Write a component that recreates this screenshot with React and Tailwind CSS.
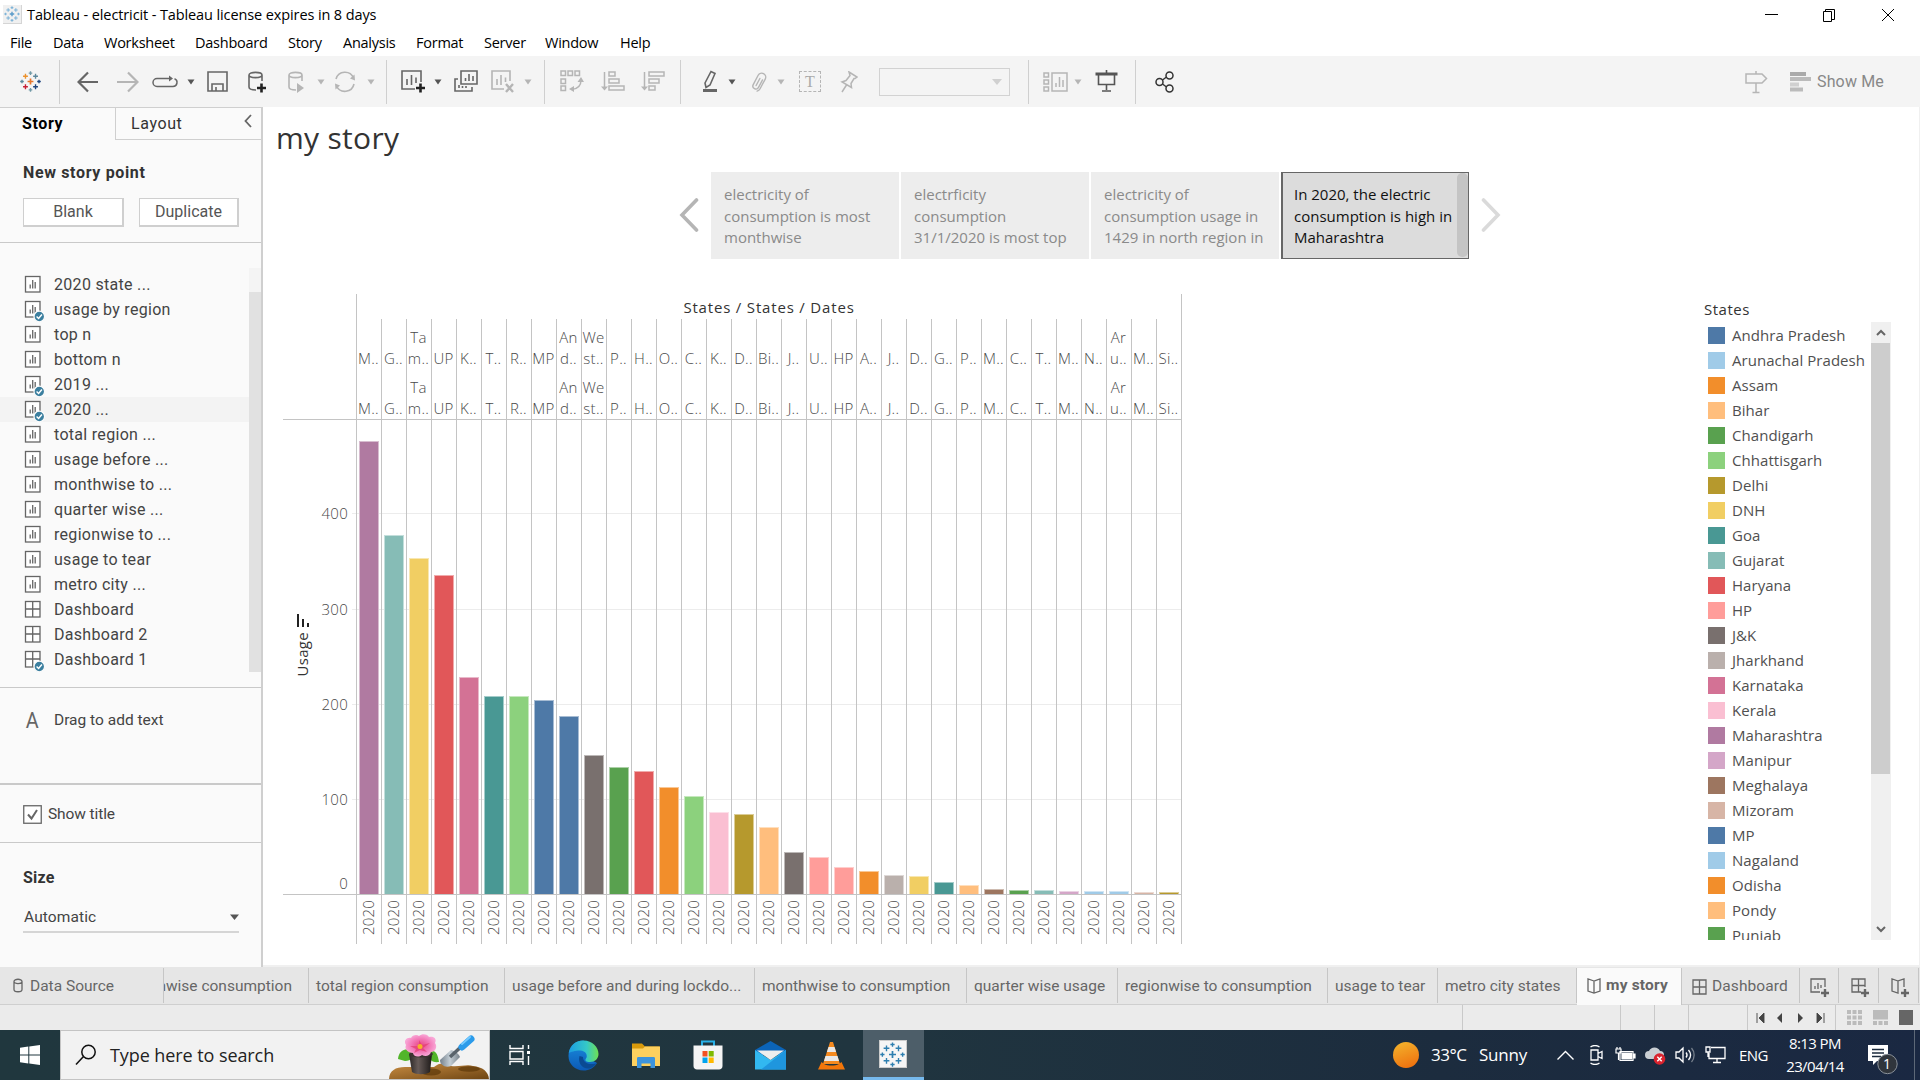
import React from "react";

const P = {
  blue: "#4e79a7", ltblue: "#a0cbe8", orange: "#f28e2b", ltorange: "#ffbe7d", green: "#59a14f",
  ltgreen: "#8cd17d", olive: "#b6992d", yellow: "#f1ce63", teal: "#499894", ltteal: "#86bcb6",
  red: "#e15759", ltred: "#ff9d9a", dark: "#79706e", gray: "#bab0ac", pink: "#d37295",
  ltpink: "#fabfd2", purple: "#b07aa1", ltpurple: "#d4a6c8", brown: "#9d7660", ltbrown: "#d7b5a6",
};

// label lines, bar height in px, colour
const BARS = [
  [["M.."], 453, P.purple], [["G.."], 359, P.ltteal], [["Ta", "m.."], 336, P.yellow], [["UP"], 319, P.red],
  [["K.."], 217, P.pink], [["T.."], 198, P.teal], [["R.."], 198, P.ltgreen], [["MP"], 194, P.blue],
  [["An", "d.."], 178, P.blue], [["We", "st.."], 139, P.dark], [["P.."], 127, P.green], [["H.."], 123, P.red],
  [["O.."], 107, P.orange], [["C.."], 98, P.ltgreen], [["K.."], 82, P.ltpink], [["D.."], 80, P.olive],
  [["Bi.."], 67, P.ltorange], [["J.."], 42, P.dark], [["U.."], 37, P.ltred], [["HP"], 27, P.ltred],
  [["A.."], 23, P.orange], [["J.."], 19, P.gray], [["D.."], 18, P.yellow], [["G.."], 12, P.teal],
  [["P.."], 9, P.ltorange], [["M.."], 5, P.brown], [["C.."], 4, P.green], [["T.."], 4, P.ltteal],
  [["M.."], 3, P.ltpurple], [["N.."], 3, P.ltblue], [["Ar", "u.."], 3, P.ltblue], [["M.."], 2, P.ltbrown], [["Si.."], 2, P.olive],
];

const LEGEND = [
  ["Andhra Pradesh", P.blue], ["Arunachal Pradesh", P.ltblue], ["Assam", P.orange], ["Bihar", P.ltorange],
  ["Chandigarh", P.green], ["Chhattisgarh", P.ltgreen], ["Delhi", P.olive], ["DNH", P.yellow], ["Goa", P.teal],
  ["Gujarat", P.ltteal], ["Haryana", P.red], ["HP", P.ltred], ["J&K", P.dark], ["Jharkhand", P.gray],
  ["Karnataka", P.pink], ["Kerala", P.ltpink], ["Maharashtra", P.purple], ["Manipur", P.ltpurple],
  ["Meghalaya", P.brown], ["Mizoram", P.ltbrown], ["MP", P.blue], ["Nagaland", P.ltblue], ["Odisha", P.orange],
  ["Pondy", P.ltorange], ["Punjab", P.green],
];

const SHEETS = [
  ["2020 state ..."], ["usage by region", 1], ["top n"], ["bottom n"], ["2019 ...", 1], ["2020 ...", 1],
  ["total region ..."], ["usage before ..."], ["monthwise to ..."], ["quarter wise ..."], ["regionwise to ..."],
  ["usage to tear"], ["metro city ..."], ["Dashboard", 0, 1], ["Dashboard 2", 0, 1], ["Dashboard 1", 1, 1],
];

const MENU = [
  ["File", "w-[43px]"], ["Data", "w-[51px]"], ["Worksheet", "w-[91px]"], ["Dashboard", "w-[93px]"], ["Story", "w-[55px]"],
  ["Analysis", "w-[73px]"], ["Format", "w-[68px]"], ["Server", "w-[61px]"], ["Window", "w-[75px]"], ["Help", "w-[60px]"],
];

function Svg({ w, h, className = "", children, stroke = "#666", sw = 1.6 }) {
  return (
    <svg width={w} height={h} viewBox={`0 0 ${w} ${h}`} fill="none" stroke={stroke} strokeWidth={sw} className={`shrink-0 ${className}`}>
      {children}
    </svg>
  );
}

const plus = (x, y, r) => `M${x - r} ${y}h${2 * r}M${x} ${y - r}v${2 * r}`;

function TableauMark({ size, colors, sw = 0.9, className = "" }) {
  const c = colors;
  return (
    <svg width={size} height={size} viewBox="0 0 20 20" fill="none" strokeWidth={sw} className={`shrink-0 ${className}`}>
      <path d={plus(10, 10, 2.8)} stroke={c[0]} strokeWidth={sw * 1.25} />
      <path d={plus(5.2, 5, 2.3)} stroke={c[1]} />
      <path d={plus(14.8, 5, 2.3)} stroke={c[2]} />
      <path d={plus(5.2, 15, 2.3)} stroke={c[3]} />
      <path d={plus(14.8, 15, 2.3)} stroke={c[4]} />
      <path d={plus(10, 2, 1.7)} stroke={c[5]} />
      <path d={plus(10, 18, 1.7)} stroke={c[5]} />
      <path d={plus(1.9, 10, 1.7)} stroke={c[6]} />
      <path d={plus(18.1, 10, 1.7)} stroke={c[4]} />
    </svg>
  );
}

function Caret({ className, light }) {
  return (
    <svg width="8" height="6" viewBox="0 0 8 6" className={`shrink-0 ${className}`}>
      <path d="M0.5 0.5h7L4 5.5z" fill={light ? "#b5b5b5" : "#555"} />
    </svg>
  );
}

const Sep = ({ className }) => <div className={`h-[44px] w-px shrink-0 bg-[#cfcfcf] ${className}`} />;

function TitleBar() {
  return (
    <div className="flex h-[29px] items-center bg-white pl-[3px]">
      <div className="flex h-[19px] w-[19px] items-center justify-center border-r border-b border-[#d5d5d5] bg-[#f0f0f0]">
        <TableauMark size={16} colors={["#5a9bc9", "#7fb4d8", "#7fb4d8", "#7fb4d8", "#7fb4d8", "#7fb4d8", "#7fb4d8"]} sw={1.4} />
      </div>
      <span className="ml-[5px] flex-1 text-[14.5px] tracking-[-0.11px] text-black">Tableau - electricit - Tableau license expires in 8 days</span>
      <Svg w={150} h={20} stroke="#000" sw={1}>
        <path d="M0 9.5h13" />
        <path d="M58.5 6.5h8v10h-8zM60.5 6V4.500h9v10H67" />
        <path d="M117 4l12 12M129 4l-12 12" />
      </Svg>
      <div className="w-[5px]" />
    </div>
  );
}

function MenuBar() {
  return (
    <div className="flex h-[27px] items-center bg-white pl-[10px]">
      {MENU.map(([t, w]) => (
        <span key={t} className={`${w} text-[14.5px] tracking-[-0.25px] text-black`}>{t}</span>
      ))}
    </div>
  );
}

const G = "#b5b5b5";
function Toolbar() {
  return (
    <div className="flex h-[51px] items-center bg-[#f4f4f4]">
      <TableauMark size={21} className="ml-[20px]" sw={1.3} colors={["#e8762c", "#eb912c", "#5b879b", "#c72035", "#1f457e", "#7099a6", "#59879b"]} />
      <Sep className="ml-[18px]" />
      <Svg w={22} h={22} className="ml-[17px]" sw={2.2}><path d="M21 11H2M11 1.500L1.500 11l9.500 9.500" /></Svg>
      <Svg w={22} h={22} className="ml-[18px]" stroke={G} sw={2.2}><path d="M0 11h19M11 1.500l9.500 9.500L11 20.500" /></Svg>
      <Svg w={27} h={14} className="ml-[13px]" sw={1.500}><path d="M13 3.500H5a4 4 0 0 0 0 8h16a4 4 0 0 0 1.500-7.700M10 3.500h8" /><path d="M17 .5v6l4-3z" fill="#666" stroke="none" /></Svg>
      <Caret className="ml-[8px]" />
      <Svg w={21} h={21} className="ml-[12px]"><path d="M1 1h19v19H1zM5 20v-7h11v7M9 20v-4" /></Svg>
      <Svg w={20} h={22} className="ml-[20px]"><path d="M14 10V4c0-3.500-13-3.500-13 0v12c0 2 3 3 7 3M1 4c0 3.500 13 3.500 13 0" /><path d="M9 17h9M13.500 12.500v9" stroke="#222" strokeWidth="2.6" /></Svg>
      <Svg w={18} h={22} className="ml-[20px]" stroke={G}><path d="M14 10V4c0-3.500-13-3.500-13 0v12c0 2 3 3 7 3M1 4c0 3.500 13 3.500 13 0" /><path d="M9 12v10l7-5z" fill={G} stroke="none" /></Svg>
      <Caret light className="ml-[11px]" />
      <Svg w={22} h={22} className="ml-[9px]" stroke={G}><path d="M2 8a9.300 9.300 0 0 1 17.500-1M20 13a9.300 9.300 0 0 1-17.500 2" /><path d="M20.500 3.500l.5 6-5-2zM1.500 18.500l-.5-6 5 2z" fill={G} stroke="none" /></Svg>
      <Caret light className="ml-[11px]" />
      <Sep className="ml-[11px]" />
      <Svg w={25} h={23} className="ml-[14px]"><path d="M20 12V1H1v18h13M6 15V9M10.500 15V5M15 13V7.500" /><path d="M15 18h9M19.500 13.500v9" stroke="#222" strokeWidth="2.600" /></Svg>
      <Caret className="ml-[8px]" />
      <Svg w={24} h={23} className="ml-[12px]"><path d="M7 1h16v13H7zM11.500 11V8M15 11V4M19 11V6M4 9H1v12h17v-4M5 18v-3M8.500 18v-2M12 18v-2" /></Svg>
      <Svg w={24} h={23} className="ml-[13px]" stroke={G}><path d="M19 11V1H1v18h12M6 15V9M10 15V5M14.500 12V7.500" /><path d="M15 14l7 8M22 14l-7 8" strokeWidth="2.400" /></Svg>
      <Caret light className="ml-[9px]" />
      <Sep className="ml-[12px]" />
      <Svg w={24} h={23} className="ml-[15px]" stroke={G} sw={1.500}><path d="M1 1h4.500v4.500H1zM8 1h4.500v4.500H8zM15 1h4.500v4.500H15zM1 9h4.500v4.500H1zM1 16h4.500v4.500H1zM21 10c0 6-3 9-9.500 9.500" /><path d="M17.500 12l3.500-5 3 5zM14 16v6l-5-3z" fill={G} stroke="none" /></Svg>
      <Svg w={24} h={23} className="ml-[17px]" stroke={G} sw={1.500}><path d="M3.500 2v16M8 2h6v4H8zM8 9h10v4H8zM8 16h15v4H8z" /><path d="M0 16.500h7l-3.500 4z" fill={G} stroke="none" /></Svg>
      <Svg w={24} h={23} className="ml-[16px]" stroke={G} sw={1.500}><path d="M3.500 2v16M8 2h15v4H8zM8 9h10v4H8zM8 16h6v4H8z" /><path d="M0 16.500h7l-3.500 4z" fill={G} stroke="none" /></Svg>
      <Sep className="ml-[15px]" />
      <Svg w={16} h={23} className="ml-[21px]"><path d="M3 13L9 1.500l4 2L8 15l-4 2.500z" /><path d="M1 20.500h14" strokeWidth="3" /></Svg>
      <Caret className="ml-[10px]" />
      <svg width="18" height="22" viewBox="0 0 18 22" fill="none" stroke={G} strokeWidth="1.400" className="ml-[13px] shrink-0">
        <g transform="rotate(28 9 11)"><path d="M12 7v8.500a3 3 0 0 1-6 0V5a4 4 0 0 1 8 0v11a5 5 0 0 1-1.500 3.500M9 7v8" strokeLinecap="round" /></g>
      </svg>
      <Caret light className="ml-[10px]" />
      <div className="ml-[14px] flex h-[21px] w-[22px] items-center justify-center border-[1.5px] border-dashed border-[#b5b5b5] font-['Liberation_Serif'] text-[16px] text-[#aaa]">T</div>
      <Svg w={18} h={22} className="ml-[19px]" stroke={G} sw={1.500}><path d="M9 1l8 5-2 1.500-1 0-3 5 .5 4L2 11l4-1.500 4-5zM6.500 14L2 21" /></Svg>
      <div className="ml-[21px] flex h-[28px] w-[131px] items-center justify-end border border-[#d2d2d2] pr-[7px]">
        <svg width="10" height="6"><path d="M0 0h10L5 6z" fill="#d0d0d0" /></svg>
      </div>
      <Sep className="ml-[18px]" />
      <Svg w={26} h={20} className="ml-[14px]" stroke={G} sw={1.500}><path d="M1 1h4.500v4H1zM1 8h4.500v4H1zM1 15h4.500v4H1zM9 1h15v18H9zM13 15v-4M16.500 15V5M20 15V8" /></Svg>
      <Caret light className="ml-[5px]" />
      <Svg w={23} h={23} className="ml-[13px]" stroke="#555"><path d="M3.500 5v9.500h16V5M11.500 14v6M7 21h9M11.500 0v3" /><path d="M.5 4h22" strokeWidth="3" /></Svg>
      <Sep className="ml-[17px]" />
      <Svg w={20} h={22} className="ml-[19px]" stroke="#333" sw={1.500}><circle cx="4.500" cy="11" r="3.500" /><circle cx="14.500" cy="4.500" r="3.500" /><circle cx="14.500" cy="17.500" r="3.500" /><path d="M7.500 9l4-3M7.500 13l4 3" /></Svg>
      <div className="flex-1" />
      <Svg w={25} h={24} stroke={G} sw={1.500}><path d="M2 4h16l4.500 4.500L18 13H2zM12 1v3M12 13v9M8.500 22.500h7" /></Svg>
      <svg width="22" height="20" className="ml-[21px] shrink-0"><path d="M0 0h16v4H0z" fill="#aaa" /><path d="M0 5h21v4H0zM0 15.500h13v4H0z" fill="#bbb" /><path d="M0 10.500h9v4H0z" fill="#d0d0d0" /></svg>
      <span className="mr-[34px] ml-[5px] w-[69px] whitespace-nowrap font-['Roboto'] text-[16px] tracking-[0.15px] text-[#888]">Show Me</span>
    </div>
  );
}

function SheetIcon({ done, dash }) {
  return (
    <svg width="21" height="23" viewBox="0 0 21 23" fill="none" stroke="#666" strokeWidth="1.300" className="shrink-0">
      <rect x="1.500" y="1.500" width="14.500" height="15.500" fill="#fff" />
      {dash ? <path d="M8.700 2v15M2 9h14" /> : <path d="M6.200 13.500V9.500M8.700 13.500V5M11.200 13.500V7" />}
      {done ? <g><circle cx="15.300" cy="16.500" r="5.300" fill="#3b7f9f" stroke="#fafafa" /><path d="M12.600 16.500l2 2 3.300-4" stroke="#fff" strokeWidth="1.400" /></g> : null}
    </svg>
  );
}

function Sidebar() {
  return (
    <div className="flex w-[263px] shrink-0 flex-col border-t border-r-2 border-[#cfcfcf] bg-[#fafafa] font-['Roboto'] text-[#444]">
      <div className="flex h-[32px]">
        <div className="w-[115px] pt-[5px] pl-[22px] text-[16px] leading-[21px] font-bold tracking-[0.6px] text-black">Story</div>
        <div className="flex flex-1 justify-between border-b border-l border-[#cfcfcf] pt-[5px] pr-[9px] pl-[15px]">
          <span className="text-[16px] leading-[21px] tracking-[0.6px] text-[#333]">Layout</span>
          <Svg w={8} h={14} className="mt-[1px]" sw={1.800}><path d="M7 1L1.500 7 7 13" /></Svg>
        </div>
      </div>
      <div className="h-[103px] border-b border-[#c9c9c9] pt-[22px] pl-[23px]">
        <div className="text-[16px] leading-[21px] font-bold tracking-[0.65px] text-[#333]">New story point</div>
        <div className="mt-[15px] flex gap-[15px] text-[16px]">
          <div className="flex h-[29px] w-[101px] items-center justify-center border border-r-2 border-b-2 border-[#cfcfcf] bg-white text-[#555]">Blank</div>
          <div className="flex h-[29px] w-[100px] items-center justify-center border border-r-2 border-b-2 border-[#cfcfcf] bg-white text-[#555]">Duplicate</div>
        </div>
      </div>
      <div className="flex h-[445px] border-b border-[#c9c9c9] pt-[25px]">
        <div className="flex flex-1 flex-col pt-[4px]">
          {SHEETS.map(([t, done, dash]) => (
            <div key={t} className={`flex h-[25px] items-center gap-[9px] pl-[24px] ${t === "2020 ..." ? "bg-[#f3f3f3]" : ""}`}>
              <div className="flex pt-[3px]"><SheetIcon done={done} dash={dash} /></div>
              <span className="text-[16px] leading-[25px] tracking-[0.3px] whitespace-nowrap">{t}</span>
            </div>
          ))}
        </div>
        <div className="h-[404px] w-[12px] bg-[#f4f4f4] pt-[24px]"><div className="h-full bg-[#e1e1e1]" /></div>
      </div>
      <div className="flex h-[97px] border-b-2 border-[#c9c9c9] pt-[21px] pl-[25px]">
        <span className="w-[29px] text-[22px] leading-[24px] text-[#666]"><span className="inline-block scale-x-90">A</span></span>
        <span className="text-[15.5px] leading-[23px]">Drag to add text</span>
      </div>
      <div className="flex h-[58px] items-center gap-[6px] border-b border-[#c9c9c9] pt-px pl-[23px]">
        <Svg w={19} h={19}><rect x=".75" y=".75" width="17.500" height="17.500" fill="#fff" strokeWidth="1.300" /><path d="M5 9.500l3.500 4L14 5" strokeWidth="2" /></Svg>
        <span className="pt-[2px] text-[15.5px] tracking-[-0.1px]">Show title</span>
      </div>
      <div className="flex-1 pt-[24px] pl-[23px]">
        <div className="text-[16px] leading-[21px] font-bold tracking-[0.2px] text-[#333]">Size</div>
        <div className="mt-[14px] flex h-[31px] w-[216px] items-center justify-between border-b-2 border-[#d5d5d5] pl-px">
          <span className="pt-[2px] text-[15.5px] tracking-[0.1px]">Automatic</span>
          <svg width="9" height="6"><path d="M0 .5h9L4.500 6z" fill="#555" /></svg>
        </div>
      </div>
    </div>
  );
}

const Point = ({ children, active }) => (
  <div className={active
    ? "relative h-[87px] w-[188px] border border-l-2 border-[#666] bg-[#dcdcdc] pt-[11px] pl-[11px] text-[#111]"
    : "h-[87px] w-[188px] bg-[#ededed] pt-[12px] pl-[13px] text-[#8a8a8a]"}>
    <div className="text-[15px] leading-[21.5px] whitespace-pre">{children}</div>
    {active && <div className="absolute top-0 right-0 h-[84px] w-[11px] rounded-[5px] bg-[#c4c4c4]" />}
  </div>
);

function StoryNav() {
  return (
    <div className="flex h-[87px] items-center pl-[416px]">
      <Svg w={20} h={34} stroke="#b5b5b5" sw={3.600} className="mt-[-2px]"><path d="M17.500 2L3 17l14.500 15" strokeLinecap="round" /></Svg>
      <div className="ml-[12px] flex gap-[2px]">
        <Point>{"electricity of\nconsumption is most\nmonthwise"}</Point>
        <Point>{"electrficity\nconsumption\n31/1/2020 is most top"}</Point>
        <Point>{"electricity of\nconsumption usage in\n1429 in north region in"}</Point>
        <Point active>{"In 2020, the electric\nconsumption is high in\nMaharashtra"}</Point>
      </div>
      <Svg w={20} h={34} stroke="#dadada" sw={3.600} className="mt-[-2px] ml-[12px]"><path d="M2.500 2L17 17 2.500 32" strokeLinecap="round" /></Svg>
    </div>
  );
}

function HeaderCell({ lines }) {
  return (
    <div className="flex h-[50px] flex-col items-center justify-end pr-px whitespace-nowrap">
      {lines.map((l) => <span key={l} className="h-[21px] leading-[21px] tracking-[0.3px]">{l}</span>)}
    </div>
  );
}

function Chart() {
  return (
    <div className="flex h-[650px] w-[900px] text-[15px] font-light text-[#484848]">
      <div className="flex h-[601px] w-[73px] flex-col border-b border-[#c4c4c4]">
        <div className="h-[126px] border-b border-[#c4c4c4]" />
        <div className="flex flex-1">
          <div className="flex w-[38px] flex-col items-center pt-[194px]">
            <svg width="13" height="13"><path d="M1 0h2v13H1zM6 5h2v8H6zM11 9h2v4h-2z" fill="#222" /></svg>
            <span className="mt-[5px] rotate-180 text-[15px] font-normal tracking-[0.3px] text-[#333] [writing-mode:vertical-rl]">Usage</span>
          </div>
          <div className="flex w-[27px] flex-col leading-[22px] tracking-[0.3px]">
            <span className="mt-[82px] flex justify-end">400</span>
            <span className="mt-[74px] flex justify-end">300</span>
            <span className="mt-[73px] flex justify-end">200</span>
            <span className="mt-[73px] flex justify-end">100</span>
            <span className="mt-[62px] flex justify-end">0</span>
          </div>
          <div className="ml-auto w-[4px]">
            <div className="mt-[93px] h-px bg-[#ececec]" />
            <div className="mt-[95px] h-px bg-[#ececec]" />
            <div className="mt-[94px] h-px bg-[#ececec]" />
            <div className="mt-[94px] h-px bg-[#ececec]" />
          </div>
        </div>
      </div>
      <div className="w-[826px]">
        <div className="flex h-[25px] items-center justify-center border-x border-[#c4c4c4] text-[15px] font-normal tracking-[0.82px] text-[#333]">
          <span className="pt-px">States / States / Dates</span>
        </div>
        <div className="flex w-[826px] border-r border-[#c4c4c4]">
          {BARS.map(([lines, h, color], i) => (
            <div key={i} className="flex w-[25px] flex-col border-l border-[#c4c4c4]">
              <div className="h-[101px] border-b border-[#c4c4c4]">
                <HeaderCell lines={lines} />
                <HeaderCell lines={lines} />
              </div>
              <div className="flex h-[475px] flex-col justify-end border-b border-[#c4c4c4] bg-[linear-gradient(#ececec,#ececec),linear-gradient(#ececec,#ececec),linear-gradient(#ececec,#ececec),linear-gradient(#ececec,#ececec)] bg-[size:100%_1px] bg-[position:0_93px,0_189px,0_284px,0_379px] bg-no-repeat pl-[2px]">
                <div className="w-[20px] border-x border-t border-white/50 bg-clip-border" style={{ height: h, backgroundColor: color }} />
              </div>
              <div className="flex h-[49px] items-start justify-center pt-[5px] pr-[2px]">
                <span className="rotate-180 text-[15px] leading-[20px] tracking-[0.2px] [writing-mode:vertical-rl]">2020</span>
              </div>
            </div>
          ))}
        </div>
      </div>
    </div>
  );
}

function Legend() {
  return (
    <div className="w-[190px] text-[15px] text-[#505050]">
      <div className="h-[22px] pl-[3px] leading-[18px] tracking-[0.5px] text-[#333]">States</div>
      <div className="flex h-[618px]">
        <div className="flex w-[170px] flex-col overflow-hidden pt-px pl-[7px]">
          {LEGEND.map(([t, c]) => (
            <div key={t} className="flex h-[25px] shrink-0 items-center gap-[7px]">
              <div className="h-[17px] w-[17px]" style={{ backgroundColor: c }} />
              <span className="leading-[25px] tracking-[0.05px] whitespace-nowrap">{t}</span>
            </div>
          ))}
        </div>
        <div className="flex w-[20px] flex-col items-center bg-[#f0f0f0]">
          <Svg w={10} h={21} sw={2}><path d="M1 13l4-4 4 4" /></Svg>
          <div className="mr-px h-[431px] w-[19px] bg-[#cdcdcd]" />
          <div className="flex-1" />
          <Svg w={10} h={21} sw={2}><path d="M1 8l4 4 4-4" /></Svg>
        </div>
      </div>
    </div>
  );
}

const TabGrid = () => <Svg w={15} h={16} sw={1.300}><path d="M1 1h13v14H1zM7.500 1v14M1 8h13" /></Svg>;
const Book = () => <Svg w={14} h={16} sw={1.300}><path d="M7 3L1 1v12l6 2 6-2V1zM7 3v12" /></Svg>;

function Tab({ w, children }) {
  return <div className={`flex h-[35px] shrink-0 items-center overflow-hidden border-r border-[#c6c6c6] pt-[2px] whitespace-nowrap ${w}`}>{children}</div>;
}

function Tabs() {
  return (
    <div className="flex h-[38px] items-start border-b border-[#cfcfcf] bg-[#e6e6e6] pt-px font-['Roboto'] text-[15.5px] text-[#666]">
      <Tab w="w-[164px] pl-[13px]">
        <Svg w={10} h={15} sw={1.300} className="mt-[-2px]"><path d="M1 3.500v8c0 3 8 3 8 0v-8c0-3-8-3-8 0c0 2.700 8 2.700 8 0" /></Svg>
        <span className="ml-[7px]">Data Source</span>
      </Tab>
      <Tab w="w-[145px] justify-end pr-[16px]">monthwise consumption</Tab>
      <Tab w="w-[196px] pl-[7px]">total region consumption</Tab>
      <Tab w="w-[250px] pl-[7px]">usage before and during lockdo...</Tab>
      <Tab w="w-[212px] pl-[7px]">monthwise to consumption</Tab>
      <Tab w="w-[151px] pl-[7px]">quarter wise usage</Tab>
      <Tab w="w-[210px] pl-[7px]">regionwise to consumption</Tab>
      <Tab w="w-[110px] pl-[7px]">usage to tear</Tab>
      <Tab w="w-[139px] pl-[7px]">metro city states</Tab>
      <div className="flex h-[37px] w-[105px] shrink-0 items-center border-r border-[#c6c6c6] bg-[#fafafa] pb-[2px] pl-[10px] font-bold tracking-[0.2px]">
        <Book /><span className="ml-[5px]">my story</span>
      </div>
      <Tab w="w-[118px] pl-[10px]"><TabGrid /><span className="ml-[5px] tracking-[0.1px]">Dashboard</span></Tab>
      <Tab w="w-[39px] pl-[10px]"><Svg w={20} h={20} className="mt-[3px]" sw={1.300}><path d="M15 9V1H1v13h9M5 11V8M8 11V5M11 10V7" /><path d="M11 15h8M15 11v8" strokeWidth="2.400" /></Svg></Tab>
      <Tab w="w-[40px] pl-[12px]"><Svg w={20} h={20} className="mt-[3px]" sw={1.300}><path d="M14 9V1H1v13h9M7.500 1v13M1 7.500h13" /><path d="M10 15h8M14 11v8" strokeWidth="2.400" /></Svg></Tab>
      <Tab w="w-[40px] pl-[12px]"><Svg w={20} h={20} className="mt-[3px]" sw={1.300}><path d="M7 3L1 1v12l6 2V3l6-2v8" /><path d="M10 15h8M14 11v8" strokeWidth="2.400" /></Svg></Tab>
    </div>
  );
}

function StatusBar() {
  return (
    <div className="flex h-[25px] justify-end bg-[#ebebeb]">
      <div className="w-[158px] border-l border-[#c9c9c9]" />
      <div className="w-[34px] border-l border-[#c9c9c9]" />
      <div className="w-[34px] border-l border-[#c9c9c9]" />
      <div className="w-[59px] border-l border-[#c9c9c9]" />
      <div className="flex w-[88px] items-center justify-between border-l border-[#c9c9c9] pr-[10px] pl-[8px]">
        {["M1 0v10M8 0v10L3 5z", "M6 0v10L1 5z", "M2 0v10l5-5z", "M8 0v10M1 0v10l5-5z"].map((d) => (
          <svg key={d} width="9" height="10" fill="#444" stroke={d.includes("v10M") ? "#444" : "none"} strokeWidth="0.9"><path d={d} /></svg>
        ))}
      </div>
      <div className="flex w-[85px] items-center gap-[11px] border-l border-[#c9c9c9] pl-[11px]">
        <svg width="15" height="15" fill="#bbb"><path d="M0 0h4v4H0zM5.500 0h4v4h-4zM11 0h4v4h-4zM0 5.500h4v4H0zM5.500 5.500h4v4h-4zM11 5.500h4v4h-4zM0 11h4v4H0zM5.500 11h4v4h-4zM11 11h4v4h-4z" /></svg>
        <svg width="15" height="15" fill="#bbb"><path d="M0 0h15v9.500H0zM0 11h4v4H0zM5.500 11h4v4h-4zM11 11h4v4h-4z" /></svg>
        <svg width="14" height="15"><path d="M0 0h14v15H0z" fill="#666" /></svg>
      </div>
    </div>
  );
}

function Garden() {
  return (
    <svg width="100" height="50" viewBox="0 0 100 50" className="shrink-0">
      <defs>
        <linearGradient id="soil" x1="0" y1="0" x2="1" y2="1"><stop offset="0" stopColor="#c98d42" /><stop offset="1" stopColor="#6b4312" /></linearGradient>
        <linearGradient id="pot" x1="0" x2="1"><stop offset="0" stopColor="#2a2625" /><stop offset=".4" stopColor="#665b58" /><stop offset="1" stopColor="#1e1a19" /></linearGradient>
        <linearGradient id="spade" x1="0" x2="1"><stop offset="0" stopColor="#75818c" /><stop offset=".5" stopColor="#c4ced5" /><stop offset="1" stopColor="#76818a" /></linearGradient>
        <radialGradient id="petal"><stop offset="0" stopColor="#e8467f" /><stop offset=".55" stopColor="#f275b4" /><stop offset="1" stopColor="#f9a6d6" /></radialGradient>
      </defs>
      <path d="M0 50C0 41 6 37 16 37l29 0c6-5 11-4 17-1c9 1 16-2 22 0c10 1 16 6 16 14z" fill="url(#soil)" />
      <ellipse cx="80" cy="39" rx="11" ry="2.800" fill="#5d3709" opacity=".7" />
      <ellipse cx="42" cy="42" rx="10" ry="3.500" fill="#5d3709" opacity=".7" />
      <path d="M9 29c1-9 8-12 15-8c2 6-2 10-8 10zM50 32c-7 1-12-3-11-10c7-4 10 2 11 10z" fill="#52b52a" />
      <path d="M20 24h23l-2 18c-4 3-14 3-18 0z" fill="url(#pot)" />
      <ellipse cx="32" cy="24" rx="12" ry="3.500" fill="#3c3330" />
      <path d="M30 6c3-3 9-2 10 1c5-1 8 2 6 6c3 4 0 9-4 9c-1 4-6 5-9 3c-4 3-9 1-9-2c-5 0-9-4-7-8c-3-4 1-8 5-7c1-3 6-4 8-2z" fill="url(#petal)" />
      <path d="M21 16l9 0 0-6 3 5 8-2-7 5 4 4-7-2-6 3 2-4z" fill="#e23a72" opacity=".7" />
      <circle cx="31" cy="16.500" r="2.500" fill="#f5b32b" />
      <path d="M51 30l11-10c4 1 8 4 9 7l-9 9c-6 2-11-1-11-6z" fill="url(#spade)" />
      <path d="M61 27l13-12" stroke="#59636b" strokeWidth="3.500" />
      <path d="M73 17L82 9" stroke="#2b9bea" strokeWidth="7" strokeLinecap="round" />
      <path d="M73 14l8-7" stroke="#74caff" strokeWidth="2" strokeLinecap="round" />
    </svg>
  );
}

function Taskbar() {
  return (
    <div className="flex h-[50px] items-center bg-[linear-gradient(90deg,#20373e_0%,#20353f_45%,#1c2c3e_75%,#1a2842_100%)] font-['Open_Sans'] text-white">
      <svg width="20" height="20" className="ml-[20px] shrink-0"><path d="M0 2.800L8.300 1.600v8H0zM9.300 1.500L20 0v9.600H9.300zM0 10.500h8.300v8L0 17.300zM9.300 10.500H20V20L9.300 18.600z" fill="#fff" /></svg>
      <div className="ml-[20px] flex h-[50px] w-[430px] shrink-0 items-center overflow-hidden border border-[#c4c4c4] bg-[#f2f2f2] text-[#222]">
        <Svg w={22} h={22} className="ml-[14px]" stroke="#111" sw={1.500}><circle cx="13.500" cy="8" r="6.700" /><path d="M8.500 12.500L1 20.500" /></Svg>
        <span className="ml-[13px] flex-1 text-[18px] tracking-[-0.08px]">Type here to search</span>
        <Garden />
      </div>
      <Svg w={22} h={20} className="ml-[19px]" stroke="#fff" sw={1.400}><path d="M1 0v3.500h13V0M1 20v-3.500h13V20M1 6.500h13v7.500H1zM19.500 0v4M19.500 11v9" /><path d="M18 6h3v3h-3z" fill="#fff" stroke="none" /></Svg>
      <svg width="31" height="31" viewBox="0 0 31 31" className="ml-[37px] shrink-0">
        <defs>
          <linearGradient id="e1" x1="0" x2="1"><stop offset="0" stopColor="#1b9de2" /><stop offset=".6" stopColor="#35c8c8" /><stop offset="1" stopColor="#6fe052" /></linearGradient>
          <linearGradient id="e2" x1="0" y1="0" x2="0" y2="1"><stop offset="0" stopColor="#1a8fe0" /><stop offset="1" stopColor="#0c59b5" /></linearGradient>
        </defs>
        <path d="M.5 16C.5 7 7 .5 15.500.5L20 18l9 5c-3 5-8 7.500-13.500 7.500C7 30.500.5 24 .5 16z" fill="url(#e2)" />
        <path d="M.8 13C2 5 8 .5 15.500.5c9 0 15 6.500 15 13.500c0 5-4 8-8.500 8c-4 0-5.500-1.500-4-3.500c2-2.500 0-8-6-8C7 10.500 2.500 12 .8 13z" fill="url(#e1)" />
        <path d="M11.500 16c-2 7 3 13.500 10 12.500c3-1 6-3.500 7.500-5.500c-4 2-14 2-14-6z" fill="#0a4a93" />
      </svg>
      <svg width="29" height="26" viewBox="0 0 29 26" className="ml-[33px] shrink-0">
        <path d="M0 1.500h10l3 3h14.500V10H0z" fill="#d99a0b" /><path d="M0 6.500h11l2-2h15V24H0z" fill="#fdd05e" />
        <path d="M5 26V16.500c0-1 .5-1.500 1.500-1.500h15c1 0 1.500.5 1.500 1.500V26h-4.500v-4.500h-9V26z" fill="#3d94dc" />
      </svg>
      <svg width="30" height="30" viewBox="0 0 30 30" className="ml-[32px] shrink-0">
        <path d="M9 6V1.500h12V6" fill="none" stroke="#28b1e8" strokeWidth="2" /><path d="M.5 5.500h29V26c0 2-1.500 3.500-3.500 3.500H4c-2 0-3.500-1.500-3.500-3.500z" fill="#f4f4f4" />
        <path d="M9.500 11h5v5.500h-5z" fill="#f25022" /><path d="M15.700 11h5v5.500h-5z" fill="#7fba00" /><path d="M9.500 17.500h5V23h-5z" fill="#00a4ef" /><path d="M15.700 17.500h5V23h-5z" fill="#ffb900" />
      </svg>
      <svg width="31" height="30" viewBox="0 0 31 30" className="ml-[32px] shrink-0">
        <path d="M0 10L15.500 1 31 10v5H0z" fill="#0b64b8" /><path d="M0 10v19.500h31V10L15.500 20z" fill="#32b8f0" /><path d="M31 10L6 29.500h25z" fill="#1f96de" /><path d="M2 10.500h27L15.500 20z" fill="#eee" />
      </svg>
      <svg width="27" height="29" viewBox="0 0 27 29" className="ml-[32px] shrink-0">
        <path d="M12 1h3l7 22H5z" fill="#f58a1f" /><path d="M10.500 6h6l1.600 5H8.900zM7.500 15h12l1.500 5H6z" fill="#e8e8e8" /><path d="M3.500 21L0 28.500h27L23.500 21l-2.500 2c-4 2-11 2-15 0z" fill="#f2760a" />
      </svg>
      <div className="ml-[18px] flex h-[50px] w-[61px] shrink-0 flex-col items-center border-b-[3px] border-[#76b9ed] bg-[#4d5e69] pt-[10px] pr-[2px]">
        <div className="flex h-[28px] w-[28px] items-center justify-center border border-[#ccc] bg-[#f6f6f6]"><TableauMark size={25} sw={1.100} colors={["#2e7fb0", "#2e7fb0", "#2e7fb0", "#2e7fb0", "#2e7fb0", "#2e7fb0", "#2e7fb0"]} /></div>
      </div>
      <div className="flex-1" />
      <div className="h-[26px] w-[26px] shrink-0 rounded-full bg-[linear-gradient(160deg,#f3b62d,#ee6a0c)]" />
      <span className="ml-[12px] w-[48px] text-[17px] tracking-[-0.5px]">33°C</span>
      <span className="w-[78px] text-[17px] tracking-[-0.2px]">Sunny</span>
      <Svg w={17} h={10} stroke="#fff" sw={1.400}><path d="M.5 9.500l8-8 8 8" /></Svg>
      <Svg w={15} h={20} className="ml-[14px]" stroke="#fff" sw={1.300}><path d="M3 5h7v10H3zM10 8.500l4-2v7l-4-2M2.500 2c3-2 6-2 9 0M2.500 18c3 2 6 2 9 0" /></Svg>
      <Svg w={21} h={16} className="ml-[12px]" stroke="#fff" sw={1.200}><path d="M5 4.500h13v9H5zM1 2h5v4H1zM2 0v2M5 0v2M3.500 6v7" /><path d="M7 6h9.500v6H7zM18.500 7h1.500v4h-1.500z" fill="#fff" /></Svg>
      <svg width="21" height="19" className="ml-[9px] shrink-0"><path d="M4 13a4 4 0 0 1 0-8a6 6 0 0 1 11 0a4 4 0 0 1 0 8z" fill="#c9ced3" /><circle cx="14.500" cy="13" r="5.800" fill="#d9232e" /><path d="M12.300 10.800l4.400 4.400M16.700 10.800l-4.400 4.400" stroke="#fff" strokeWidth="1.400" /></svg>
      <Svg w={20} h={18} className="ml-[9px]" stroke="#fff" sw={1.300}><path d="M1 6h3l4-4v14l-4-4H1zM11 6.500c1.300 1.500 1.300 3.500 0 5M13.500 4c2.500 3 2.500 7 0 10" /><path d="M16.500 2c3.500 4 3.500 10 0 14" stroke="#77808c" /></Svg>
      <Svg w={21} h={18} className="ml-[10px]" stroke="#fff" sw={1.300}><path d="M6 1.500h14v11H4V7M12 12.500V16M8 16.500h8M1 1h4v5H1zM3 6v5" /></Svg>
      <span className="ml-[13px] w-[30px] text-[15px] tracking-[-0.6px]">ENG</span>
      <div className="ml-[11px] flex h-[50px] w-[70px] flex-col items-center justify-center pb-[1px] text-[15px] leading-[23px] tracking-[-0.6px] whitespace-nowrap"><span>8:13 PM</span><span>23/04/14</span></div>
      <div className="relative ml-[18px] h-[20px] w-[46px] shrink-0">
        <svg width="34" height="34" className="absolute top-0 left-0"><path d="M0 0h20v16H9l-4 4v-4H0z" fill="#fff" /><path d="M4 4.500h12M4 8h12M4 11.500h9" stroke="#1b2a3c" strokeWidth="1.300" /><circle cx="19.500" cy="19" r="9.700" fill="#30353c" stroke="#8a9199" /></svg>
        <span className="absolute top-[9px] left-[15px] text-[14px] leading-[20px]">1</span>
      </div>
      <div className="h-[50px] w-[6px] shrink-0 border-l border-[#5d6877]" />
    </div>
  );
}

export default function App() {
  return (
    <div className="flex h-[1080px] w-[1920px] flex-col overflow-hidden bg-white font-['Open_Sans',sans-serif]">
      <TitleBar />
      <MenuBar />
      <Toolbar />
      <div className="flex h-[860px]">
        <Sidebar />
        <div className="flex flex-1 flex-col border-r border-b-2 border-[#f0f0f0] bg-white">
          <div className="h-[65px] pt-[10px] pl-[13px] text-[30px] leading-[42px] tracking-[0.3px] text-[#333]">my story</div>
          <StoryNav />
          <div className="flex justify-between pt-[35px] pr-[28px] pl-[20px]">
            <Chart />
            <div className="pt-[6px]"><Legend /></div>
          </div>
        </div>
      </div>
      <Tabs />
      <StatusBar />
      <Taskbar />
    </div>
  );
}
